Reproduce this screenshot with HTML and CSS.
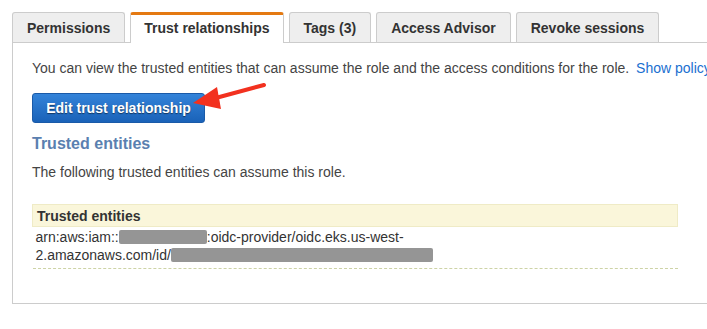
FILE: index.html
```html
<!DOCTYPE html>
<html lang="en">
<head>
    <meta charset="UTF-8">
    <meta name="viewport" content="width=device-width, initial-scale=1.0">
    <title>Role - Trust relationships</title>
    <link rel="stylesheet" href="styles.css">
</head>
<body>

    <ul class="tabs">
        <li class="tab">Permissions</li>
        <li class="tab active">Trust relationships</li>
        <li class="tab">Tags (3)</li>
        <li class="tab">Access Advisor</li>
        <li class="tab">Revoke sessions</li>
    </ul>

    <div class="panel">
        <p class="intro">You can view the trusted entities that can assume the role and the access conditions for the role. <a href="#" class="link">Show policy document</a></p>

        <button type="button" class="btn">Edit trust relationship</button>

        <h2>Trusted entities</h2>
        <p class="note">The following trusted entities can assume this role.</p>

        <table class="entities">
            <thead>
                <tr><th>Trusted entities</th></tr>
            </thead>
            <tbody>
                <tr>
                    <td>arn:aws:iam::<span class="redacted r-account"></span>:oidc-provider/oidc.eks.us-west-<br>2.amazonaws.com/id/<span class="redacted r-id"></span></td>
                </tr>
            </tbody>
        </table>
    </div>

    <!-- annotation arrow drawn over the screenshot -->
    <svg class="arrow" width="80" height="36" viewBox="0 0 80 36">
        <line x1="74" y1="4" x2="22" y2="18" stroke="#f2311f" stroke-width="4" stroke-linecap="round"/>
        <polygon points="3,22 27,6 31,28" fill="#f2311f"/>
    </svg>

</body>
</html>
```

FILE: styles.css
```css
body {
    font-family: "Liberation Sans", Arial, Helvetica, sans-serif;
    font-size: 14px;
    color: #444;
    background-color: #fff;
    margin: 0;
    padding-top: 12px;
    width: 707px;
    height: 329px;
    overflow: hidden;
    position: relative;
}
.tabs {
    list-style: none;
    margin: 0 0 0 12px;
    padding: 0;
    display: flex;
    gap: 5px;
    border-bottom: 1px solid #ccc;
    width: 720px;
}
.tab {
    height: 29px;
    line-height: 31px;
    padding: 0 14px;
    background-color: #eee;
    border: 1px solid #ccc;
    border-bottom: none;
    border-radius: 3px 3px 0 0;
    font-weight: bold;
    color: #333;
}
.tab.active {
    background-color: #fff;
    border-top: 3px solid #e47911;
    height: 27px;
    line-height: 27px;
    padding: 0 13px 1px;
    margin-bottom: -1px;
}
.panel {
    margin-left: 12px;
    width: 740px;
    border-left: 1px solid #ccc;
    border-bottom: 1px solid #ccc;
    padding: 15px 0 34px 19px;
}
.intro {
    margin: 0;
    line-height: 20px;
    white-space: nowrap;
}
.link {
    color: #1a6fd0;
    text-decoration: none;
    margin-left: 3px;
}
.btn {
    display: block;
    margin-top: 15px;
    width: 173px;
    height: 30px;
    padding: 0;
    border: 1px solid #1a5aa8;
    border-radius: 3px;
    background: linear-gradient(#3383d9, #1a62b8);
    color: #fff;
    font-family: inherit;
    font-size: 14px;
    font-weight: bold;
    text-shadow: 0 1px 1px rgba(0, 0, 0, 0.5);
}
h2 {
    margin: 11px 0 0;
    font-size: 16px;
    line-height: 20px;
    color: #5a80b0;
}
.note {
    margin: 8px 0 0;
    line-height: 20px;
}
.entities {
    margin-top: 22px;
    width: 646px;
    border-collapse: collapse;
}
.entities th {
    text-align: left;
    font-weight: bold;
    color: #333;
    background-color: #faf6da;
    border: 1px solid #efebc6;
    padding: 2px 4px 1px;
    line-height: 18px;
}
.entities td {
    color: #333;
    padding: 1px 3px 4px;
    line-height: 18px;
    border-bottom: 1px dashed #cdd3a6;
}
.redacted {
    display: inline-block;
    vertical-align: -2px;
    height: 14px;
    background-color: #959595;
    border-radius: 2px;
}
.r-account {
    width: 88px;
}
.r-id {
    width: 262px;
}
.arrow {
    position: absolute;
    left: 190px;
    top: 81px;
}
```
